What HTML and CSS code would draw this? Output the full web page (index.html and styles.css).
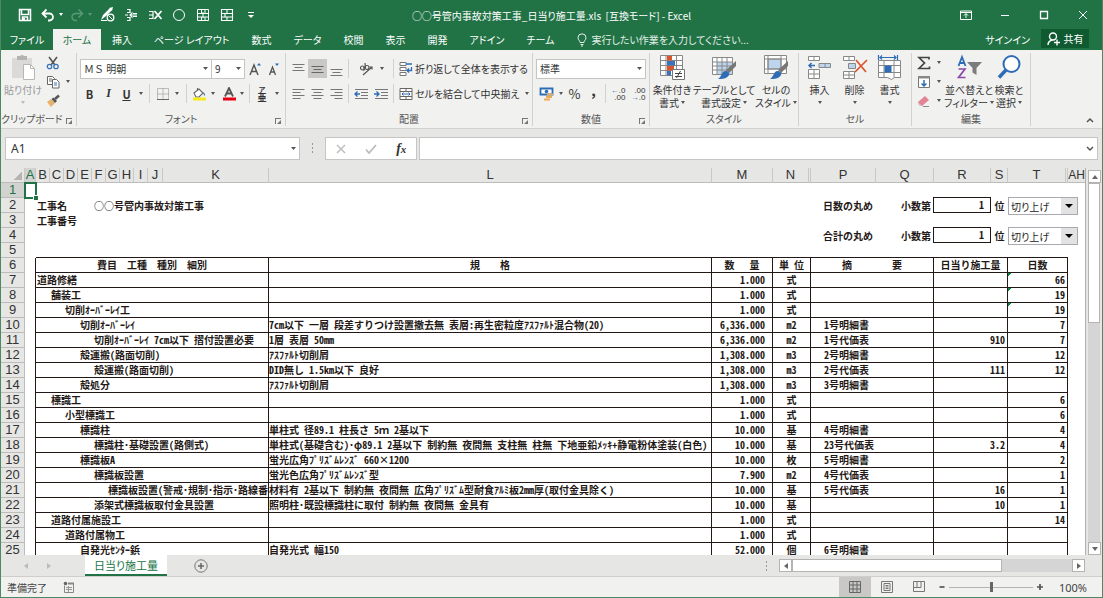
FILE: index.html
```html
<!DOCTYPE html>
<html lang="ja">
<head>
<meta charset="utf-8">
<title>○○号管内事故対策工事_日当り施工量.xls - Excel</title>
<link rel="stylesheet" href="styles.css">
</head>
<body>
<div class="window">
<header class="titlebar">
  <div class="quick">
    <button class="q" aria-label="上書き保存"><svg width="14" height="14" viewBox="0 0 14 14"><path d="M1.500 1.500h11v11h-11z M3.500 2v4.500h7V2 M4.500 12V9h5v3" fill="none" stroke="#fff" stroke-width="1.500"/><path d="M5 10h2v3H5z" fill="#fff"/></svg></button>
    <button class="q q-undo" aria-label="元に戻す"><svg width="14" height="14" viewBox="0 0 14 14"><path d="M5.500 1.500L1.500 5.500l4 4M2 5.500h6.500a3.500 3.500 0 0 1 0 7H7" fill="none" stroke="#fff" stroke-width="1.800"/></svg><i class="caret light"></i></button>
    <button class="q q-redo" aria-label="やり直し"><svg width="14" height="14" viewBox="0 0 14 14"><path d="M8.500 1.500l4 4-4 4M12 5.500H5.500a3.500 3.500 0 0 0 0 7H7" fill="none" stroke="#5b9877" stroke-width="1.500"/></svg><i class="caret dim"></i></button>
    <button class="q" aria-label="図形の書式"><svg width="15" height="15" viewBox="0 0 15 15"><path d="M1 13l2-5 7-7 2 2-6 6z M9 1l4-1-1 4z" fill="#fff"/><circle cx="10.500" cy="10.500" r="3.300" fill="#217346" stroke="#fff" stroke-width="1.300"/><path d="M8.500 8.500l4 4M1 13.500h6" stroke="#fff"/></svg></button>
    <button class="q" aria-label="行の挿入"><svg width="14" height="14" viewBox="0 0 14 14"><path d="M3 1.500h3v3H3M3 12.500h3v-3H3M6 7h7M8.500 4.500L6 7l2.500 2.500M1 7h3M9 5.500h4M9 8.500h4" fill="none" stroke="#fff" stroke-width="1.200"/></svg></button>
    <button class="q" aria-label="行の削除"><svg width="15" height="14" viewBox="0 0 15 14"><path d="M1 3.500h4v7H1M1 7h4" fill="none" stroke="#fff" stroke-width="1.200"/><path d="M6.500 3l7 8M13.500 3l-7 8" stroke="#fff" stroke-width="1.800"/></svg></button>
    <button class="q" aria-label="円"><svg width="14" height="14" viewBox="0 0 14 14"><circle cx="7" cy="7" r="5.500" fill="none" stroke="#fff"/></svg></button>
    <button class="q" aria-label="セルの結合"><svg width="14" height="14" viewBox="0 0 14 14"><path d="M1.500 1.500h11v11h-11zM1.500 5.500h11M1.500 9h11M5.500 1.500v4M9 1.500v4M5.500 9v3.500M9 9v3.500M7 4v6" fill="none" stroke="#fff"/></svg></button>
    <button class="q" aria-label="セルの分割"><svg width="14" height="14" viewBox="0 0 14 14"><path d="M1.500 1.500h11v11h-11zM1.500 5.500h11M1.500 9h11M7 1.500v4M5 5.500v3.500M7 9v3.500" fill="none" stroke="#fff" stroke-width="1.100"/></svg></button>
    <button class="q" aria-label="カスタマイズ"><svg width="8" height="8" viewBox="0 0 8 8"><path d="M1 1.500h6" stroke="#fff"/><path d="M1 4h6L4 7z" fill="#fff"/></svg></button>
  </div>
  <h1 class="doc-title">○○号管内事故対策工事_日当り施工量.xls&nbsp; [互換モード] - Excel</h1>
  <div class="win-buttons">
    <button aria-label="リボンの表示"><svg width="12" height="10" viewBox="0 0 12 10"><path d="M.5 1h11v8.500H.5zM.5 2.500h11M6 8V4M4 5.500l2-2 2 2" fill="none" stroke="#fff"/></svg></button>
    <button aria-label="最小化"><svg width="10" height="10" viewBox="0 0 10 10"><path d="M1 5.500h8" stroke="#fff"/></svg></button>
    <button aria-label="最大化"><svg width="10" height="10" viewBox="0 0 10 10"><path d="M1.500 1.500h7v7h-7z" fill="none" stroke="#fff" stroke-width="1.300"/></svg></button>
    <button aria-label="閉じる"><svg width="10" height="10" viewBox="0 0 10 10"><path d="M1 1l8 8M9 1L1 9" stroke="#fff"/></svg></button>
  </div>
</header>
<nav class="tabs">
  <button class="tab tab-file">ファイル</button>
  <button class="tab tab-home">ホーム</button>
  <button class="tab">挿入</button>
  <button class="tab">ページ レイアウト</button>
  <button class="tab">数式</button>
  <button class="tab">データ</button>
  <button class="tab">校閲</button>
  <button class="tab">表示</button>
  <button class="tab">開発</button>
  <button class="tab">アドイン</button>
  <button class="tab">チーム</button>
  <button class="tell"><svg width="10" height="14" viewBox="0 0 10 14"><path d="M3 9.500C3 7.500 1 7 1 4.800a4 4 0 0 1 8 0C9 7 7 7.500 7 9.500zM3.500 11.500h3M4 13h2" fill="none" stroke="#e3efe8"/></svg>実行したい作業を入力してください...</button>
  <button class="tab signin">サインイン</button>
  <button class="share"><svg width="13" height="14" viewBox="0 0 13 14"><circle cx="6" cy="4.500" r="3.500" fill="none" stroke="#fff" stroke-width="1.400"/><path d="M1 13c0-3 2-4.500 4.500-5M7 10.500h6M10 7.500v6" fill="none" stroke="#fff" stroke-width="1.400"/></svg>共有</button>
</nav>

<section class="ribbon">
  <div class="group g-clip">
    <div class="body">
      <button class="big paste"><svg width="25" height="27" viewBox="0 0 25 27"><path d="M1 4h20v20H1z" fill="#dcdad9"/><path d="M6 2h3a2.500 2.500 0 0 1 4 0h3v4H6z" fill="#b5b3b2"/><path d="M12.500 10.500h7l4 4v11h-11z" fill="#fff" stroke="#b9b7b6"/><path d="M19.500 10.500v4h4" fill="none" stroke="#b9b7b6"/></svg><span>貼り付け</span><i class="caret dim-gray"></i></button>
      <div class="stack">
        <button aria-label="切り取り"><svg width="14" height="14" viewBox="0 0 14 14"><path d="M3 1l6 8M11 1L5 9" stroke="#555" stroke-width="1.600"/><circle cx="3.500" cy="10.500" r="2.200" fill="none" stroke="#3a74b8" stroke-width="1.300"/><circle cx="10" cy="10.500" r="2.200" fill="none" stroke="#3a74b8" stroke-width="1.300"/></svg></button>
        <button aria-label="コピー"><svg width="14" height="14" viewBox="0 0 14 14"><path d="M1.500 1.500h5l2 2v6h-7zM3 4h3M3 6h3" fill="#fff" stroke="#666"/><path d="M6.500 4.500h4l2.500 2.500v6h-6.500z" fill="#fff" stroke="#666"/><path d="M8 8h3M8 10h3" stroke="#3a74b8"/></svg><i class="caret"></i></button>
        <button aria-label="書式のコピー"><svg width="14" height="14" viewBox="0 0 14 14"><path d="M1 8l4-3 4 4-4 4z" fill="#e7b36c"/><path d="M5.500 5l3.500 4 2-2-3.500-3.500z" fill="#555"/><path d="M9 5l4-3.500" stroke="#555" stroke-width="2.500"/></svg></button>
      </div>
    </div>
    <div class="label">クリップボード</div><button class="launch" aria-label="クリップボードの設定"></button>
  </div>

  <div class="group g-font">
    <div class="body rows">
      <div class="row">
        <select class="combo font-name" aria-label="フォント"><option>ＭＳ 明朝</option></select><select class="combo font-size" aria-label="フォント サイズ"><option>9</option></select>
        <button class="w19" aria-label="フォント サイズの拡大"><svg width="13" height="14" viewBox="0 0 13 14"><path d="M1 13L5 3l4 10M2.500 9.500h5" fill="none" stroke="#555" stroke-width="1.400"/><path d="M8 3.500L10 1l2 2.500z" fill="#2e6cb5"/></svg></button>
        <button class="w19" aria-label="フォント サイズの縮小"><svg width="13" height="14" viewBox="0 0 13 14"><path d="M1.500 13L4.500 5l3 8M2.500 10h4" fill="none" stroke="#555" stroke-width="1.300"/><path d="M7 1.500h4L9 4z" fill="#2e6cb5"/></svg></button>
      </div>
      <div class="row">
        <button class="w19 bold">B</button><button class="w19 ital">I</button><button class="w29 far"><u>U</u><i class="caret"></i></button><hr>
        <button class="w32" aria-label="罫線"><svg width="12" height="12" viewBox="0 0 12 12"><path d="M.5.5h11v11H.5zM6 .5v11M.5 6h11" fill="none" stroke="#888" stroke-dasharray="1 1"/><path d="M0 11.500h12" stroke="#666"/></svg><i class="caret"></i></button><hr>
        <button class="w29" aria-label="塗りつぶしの色"><svg width="15" height="14" viewBox="0 0 15 14"><path d="M2 6l5-4 4 4-4 4H4zM5.500 4V1" fill="#fff" stroke="#666" stroke-width="1.100"/><path d="M10.500 5c2 1 3 2 2.500 4-1-1-1.500-2-2.500-4z" fill="#2e6cb5"/><path d="M1 10.500h13v3H1z" fill="#f6e91c"/></svg><i class="caret"></i></button>
        <button class="w29" aria-label="フォントの色"><svg width="14" height="14" viewBox="0 0 14 14"><path d="M3 9.500L7 1l4 8.500M4.500 6.500h5" fill="none" stroke="#555" stroke-width="1.800"/><path d="M1 10.500h13v3H1z" fill="#e60012"/></svg><i class="caret"></i></button><hr>
        <button class="w32 far" aria-label="ふりがな"><span class="ruby"><small>ア</small>亜</span><i class="caret"></i></button>
      </div>
    </div>
    <div class="label">フォント</div><button class="launch" aria-label="フォントの設定"></button>
  </div>

  <div class="group g-align">
    <div class="body rows">
      <div class="row">
        <button class="w19" aria-label="上揃え"><svg width="13" height="14" viewBox="0 0 13 14"><path d="M.5 2.500h12M2.500 5.500h8M.5 8.500h12" stroke="#777"/></svg></button>
        <button class="w19 on" aria-label="上下中央揃え"><svg width="13" height="14" viewBox="0 0 13 14"><path d="M.5 4.500h12M2.500 7.500h8M.5 10.500h12" stroke="#666"/></svg></button>
        <button class="w19" aria-label="下揃え"><svg width="13" height="14" viewBox="0 0 13 14"><path d="M.5 7.500h12M2.500 10.500h8M.5 13.500h12" stroke="#777"/></svg></button><hr>
        <button class="w40" aria-label="方向"><svg width="15" height="14" viewBox="0 0 15 14"><circle cx="3.500" cy="6" r="2" fill="none" stroke="#555" stroke-width="1.200"/><circle cx="8" cy="5.500" r="2" fill="none" stroke="#555" stroke-width="1.200"/><path d="M5 4.500v4M6 1l.5 5M4 13l9-8M10.500 5H13v2.500" fill="none" stroke="#555" stroke-width="1.200"/></svg><i class="caret"></i></button><hr>
        <button class="text-btn"><svg width="14" height="14" viewBox="0 0 14 14"><path d="M1 .5h6v3H1zM1 5.500h6v3H1zM1 10.500h6v3H1z" fill="#fff" stroke="#777"/><path d="M7 2h6M12.500 5v3.500H8M10 6.500L8 8.500l2 2" fill="none" stroke="#2e6cb5" stroke-width="1.300"/></svg>折り返して全体を表示する</button>
      </div>
      <div class="row">
        <button class="w19" aria-label="左揃え"><svg width="13" height="12" viewBox="0 0 13 12"><path d="M.5 1.500h12M.5 4.500h8M.5 7.500h12M.5 10.500h8" stroke="#777"/></svg></button>
        <button class="w19" aria-label="中央揃え"><svg width="13" height="12" viewBox="0 0 13 12"><path d="M.5 1.500h12M2.500 4.500h8M.5 7.500h12M2.500 10.500h8" stroke="#777"/></svg></button>
        <button class="w19" aria-label="右揃え"><svg width="13" height="12" viewBox="0 0 13 12"><path d="M.5 1.500h12M4.500 4.500h8M.5 7.500h12M4.500 10.500h8" stroke="#777"/></svg></button><hr>
        <button class="w20" aria-label="インデントを減らす"><svg width="15" height="12" viewBox="0 0 15 12"><path d="M1 1.500h13M7 4.500h7M7 7.500h7M1 10.500h13" stroke="#777"/><path d="M1 6h5M3.500 3.500L1 6l2.500 2.500" fill="none" stroke="#2e6cb5" stroke-width="1.400"/></svg></button>
        <button class="w20" aria-label="インデントを増やす"><svg width="15" height="12" viewBox="0 0 15 12"><path d="M1 1.500h13M7 4.500h7M7 7.500h7M1 10.500h13" stroke="#777"/><path d="M0 6h5M2.500 3.500L5 6 2.500 8.500" fill="none" stroke="#2e6cb5" stroke-width="1.400"/></svg></button><hr>
        <button class="text-btn"><svg width="14" height="14" viewBox="0 0 14 14"><path d="M1 1.500h12v11H1zM1 4.500h12M1 9.500h12M7 1.500v3M7 9.500v3" fill="#fff" stroke="#666"/><path d="M3 7h8M4.500 5.500L3 7l1.500 1.500M9.500 5.500L11 7 9.500 8.500" fill="none" stroke="#2e6cb5"/></svg>セルを結合して中央揃え<i class="caret"></i></button>
      </div>
    </div>
    <div class="label">配置</div><button class="launch" aria-label="配置の設定"></button>
  </div>

  <div class="group g-num">
    <div class="body rows">
      <div class="row"><select class="combo num-format" aria-label="数値の書式"><option>標準</option></select></div>
      <div class="row">
        <button class="w29" aria-label="通貨表示形式"><svg width="16" height="14" viewBox="0 0 16 14"><path d="M1.500 1.500h12v6h-12z" fill="#fff" stroke="#2e6cb5" stroke-width="1.800"/><circle cx="7.500" cy="4.500" r="1.800" fill="#2e6cb5"/><path d="M8 6.500h6v2H8zM7 9h6v2H7zM5 11.500h6v2H5z" fill="#e9aa5b"/></svg><i class="caret"></i></button>
        <button class="w19 pct">%</button><button class="w19 comma">,</button><hr>
        <button class="w20" aria-label="小数点以下の表示桁数を増やす"><span class="dec"><span><b>←</b>.0</span><span>.00</span></span></button>
        <button class="w20" aria-label="小数点以下の表示桁数を減らす"><span class="dec"><span>.00</span><span><b>→</b>.0</span></span></button>
      </div>
    </div>
    <div class="label">数値</div><button class="launch" aria-label="数値の設定"></button>
  </div>

  <div class="group g-style">
    <div class="body">
      <button class="big w42"><svg width="26" height="27" viewBox="0 0 26 27"><path d="M1.500 1.500h22v20h-22zM7 1.500v20M17.500 1.500v20M1.500 6.500h22M1.500 11.500h22M1.500 16.500h22" fill="#fff" stroke="#888"/><path d="M8 2h5v4.500H8zM8 12h7v4.500H8z" fill="#d9532c"/><path d="M8 7h8v4.500H8zM8 17h4v4.500H8z" fill="#3a74b8"/><path d="M13.500 15.500h12v10h-12z" fill="#fff" stroke="#777"/><path d="M16 19.500h7M16 22.500h7M21.500 17l-4 7" stroke="#444"/></svg><span>条件付き<br>書式<i class="caret"></i></span></button>
      <button class="big w62"><svg width="26" height="27" viewBox="0 0 26 27"><path d="M1.500 3.500h20v17h-20z" fill="#fff" stroke="#888"/><path d="M6 8h15v12H6z" fill="#bdd5ec"/><path d="M1.500 8h20M1.500 12h20M1.500 16h20M6 3.500v17M11 3.500v17M16 3.500v17" stroke="#888"/><path d="M25 7v5l-7 7-3-3z" fill="#777"/><path d="M14 17c3 0 5 2 4 4-2 4-7 4-11 4 4-2 3-7 7-8z" fill="#2e6cb5"/></svg><span>テーブルとして<br>書式設定<i class="caret"></i></span></button>
      <button class="big w42"><svg width="26" height="27" viewBox="0 0 26 27"><path d="M1.500 1.500h22v18h-22z" fill="#fff" stroke="#888"/><path d="M5 5h13v10H5z" fill="#bdd5ec" stroke="#888"/><path d="M5 1.500v18M1.500 5h22M1.500 15h22M18 1.500v18" fill="none" stroke="#888"/><path d="M25 7v5l-7 7-3-3z" fill="#777"/><path d="M14 17c3 0 5 2 4 4-2 4-7 4-11 4 4-2 3-7 7-8z" fill="#2e6cb5"/></svg><span>セルの<br>スタイル<i class="caret"></i></span></button>
    </div>
    <div class="label">スタイル</div>
  </div>

  <div class="group g-cell">
    <div class="body">
      <button class="big w35"><svg width="25" height="27" viewBox="0 0 25 27"><path d="M1.500 2.500h11v4h-11zM7 2.500v4M1.500 15.500h11v9h-11zM7 15.500v9M1.500 20h11" fill="#fff" stroke="#888"/><path d="M12 9.500h11.500v4H12z" fill="#bdd5ec" stroke="#888"/><path d="M18 9.500v4" stroke="#888"/><path d="M2 11.500h6M4.500 9L2 11.500 4.500 14" fill="none" stroke="#2e6cb5" stroke-width="1.500"/></svg><span>挿入</span><i class="caret"></i></button>
      <button class="big w35"><svg width="26" height="27" viewBox="0 0 26 27"><path d="M1.500 2.500h11v4h-11zM7 2.500v4M1.500 17.500h11v7h-11zM7 17.500v7M1.500 21h11" fill="#fff" stroke="#888"/><path d="M6.500 9.500h7v5h-7z" fill="#bdd5ec" stroke="#888"/><path d="M14 6l10 12M25 6L13 18" stroke="#d9532c" stroke-width="1.700"/></svg><span>削除</span><i class="caret"></i></button>
      <button class="big w35"><svg width="26" height="27" viewBox="0 0 26 27"><path d="M1.500 1v5M20.500 1v5M3 3.500h16M5 1.500L3 3.500l2 2M17 1.500l2 2-2 2" fill="none" stroke="#2e6cb5" stroke-width="1.200"/><path d="M1.500 6.500h22v17h-6l-3 2-4-2h-9zM7 6.500v17M17 6.500v17M1.500 11.500h22M1.500 18.500h22" fill="#fff" stroke="#888"/><path d="M7.500 11.500h7v7h-7z" fill="#2e6cb5"/></svg><span>書式</span><i class="caret"></i></button>
    </div>
    <div class="label">セル</div>
  </div>

  <div class="group g-edit">
    <div class="body">
      <div class="stack wide">
        <button aria-label="合計"><svg width="14" height="14" viewBox="0 0 14 14"><path d="M12 3.500V1.500H2l5.500 5.500L2 12.500h10.500v-2" fill="none" stroke="#444" stroke-width="1.700"/></svg><i class="caret"></i></button>
        <button aria-label="フィル"><svg width="14" height="14" viewBox="0 0 14 14"><path d="M1.500 1.500h11v11h-11z" fill="#fff" stroke="#777"/><path d="M1 1h12v2.500H1z" fill="#888"/><path d="M7 5v6M4.500 8.500L7 11l2.500-2.500" fill="none" stroke="#2e6cb5" stroke-width="1.500"/></svg><i class="caret"></i></button>
        <button aria-label="クリア"><svg width="14" height="14" viewBox="0 0 14 14"><path d="M1 8l7-6 4 4-7 6H3z" fill="#e58293"/><path d="M1 8l4 4H3L1 10z" fill="#c9c9c9"/><path d="M6 12.500h6" stroke="#888"/></svg><i class="caret"></i></button>
      </div>
      <button class="big w48"><svg width="27" height="27" viewBox="0 0 27 27"><path d="M2.500 12L6 3l3.500 9M3.500 9h5" fill="none" stroke="#2e6cb5" stroke-width="1.800"/><path d="M2.500 15h6.500l-6.500 8.500h7" fill="none" stroke="#8a4aa8" stroke-width="1.700"/><path d="M11 8h15l-5.500 6v7l-4-2.500V14z" fill="#7b7b7b"/></svg><span>並べ替えと<br>フィルター<i class="caret"></i></span></button>
      <button class="big w32"><svg width="26" height="27" viewBox="0 0 26 27"><circle cx="15.500" cy="10" r="8" fill="#fff" stroke="#2e6cb5" stroke-width="2"/><path d="M10 16l-7 7.500" stroke="#2e6cb5" stroke-width="3.500"/></svg><span>検索と<br>選択<i class="caret"></i></span></button>
    </div>
    <div class="label">編集</div>
  </div>
  <button class="collapse" aria-label="リボンを折りたたむ"><svg width="8" height="6" viewBox="0 0 8 6"><path d="M1 5l3-3 3 3" fill="none" stroke="#555" stroke-width="1.500"/></svg></button>
</section>

<section class="formula-bar">
  <select class="combo name-box" aria-label="名前ボックス"><option>A1</option></select>
  <span class="grip"></span>
  <div class="fx">
    <button aria-label="キャンセル"><svg width="10" height="10" viewBox="0 0 10 10"><path d="M1 1l8 8M9 1L1 9" stroke="#bbb" stroke-width="1.400"/></svg></button>
    <button aria-label="入力"><svg width="12" height="10" viewBox="0 0 12 10"><path d="M1 5.500L4 9l7-8" fill="none" stroke="#bbb" stroke-width="1.800"/></svg></button>
    <button class="fx-btn"><b>f</b>x</button>
  </div>
  <div class="formula"><input type="text" aria-label="数式"><button aria-label="数式バーの展開"><svg width="8" height="6" viewBox="0 0 8 6"><path d="M1 1l3 3 3-3" fill="none" stroke="#555" stroke-width="1.500"/></svg></button></div>
</section>

<main class="sheet">
  <div class="grid">
  <table>
    <colgroup><col class="c-head"><col class="c-a"><col class="c-s"><col class="c-s"><col class="c-s"><col class="c-s"><col class="c-s"><col class="c-s"><col class="c-s"><col class="c-s"><col class="c-j"><col class="c-k"><col><col class="c-m"><col class="c-n"><col class="c-o"><col class="c-p"><col class="c-q"><col class="c-r"><col class="c-t1"><col class="c-t"><col class="c-o"><col class="c-t1"></colgroup>
    <thead><tr><th class="corner"></th><th class="sel">A</th><th>B</th><th>C</th><th>D</th><th>E</th><th>F</th><th>G</th><th>H</th><th>I</th><th>J</th><th>K</th><th>L</th><th>M</th><th>N</th><th></th><th>P</th><th>Q</th><th>R</th><th>S</th><th>T</th><th></th><th class="last">AH</th></tr></thead>
    <tbody>
    <tr><th class="sel">1</th><td class="active"></td><td colspan="21"></td></tr>
    <tr><th>2</th><td></td><td colspan="4" class="i0">工事名</td><td colspan="8" class="proj">○○号管内事故対策工事</td><td colspan="2"></td><td class="rl">日数の丸め</td><td class="rd">小数第</td><td class="boxed">1</td><td class="ctr">位</td><td colspan="3" class="host"><select class="round" aria-label="日数の丸め"><option>切り上げ</option></select></td></tr>
    <tr><th>3</th><td></td><td colspan="16" class="i0">工事番号</td><td class="over"></td><td colspan="4"></td></tr>
    <tr><th>4</th><td></td><td colspan="14"></td><td class="rl">合計の丸め</td><td class="rd">小数第</td><td class="boxed">1</td><td class="ctr">位</td><td colspan="3" class="host"><select class="round" aria-label="合計の丸め"><option>切り上げ</option></select></td></tr>
    <tr class="pre-head"><th>5</th><td class="none"></td><td colspan="20"></td><td class="none"></td></tr>
    <tr class="d heads"><th>6</th><td></td><td colspan="10">費目　工種　種別　細別</td><td>規　　格</td><td>数   量</td><td colspan="2">単 位</td><td colspan="2">摘　　　　要</td><td colspan="2">日当り施工量</td><td colspan="2">日数</td><td></td></tr>
    <tr class="d"><th>7</th><td></td><td colspan="10" class="i0">道路修繕</td><td></td><td>1.000</td><td colspan="2">式</td><td colspan="2"></td><td colspan="2"></td><td colspan="2" class="flag">66</td><td></td></tr>
    <tr class="d"><th>8</th><td></td><td colspan="10" class="i1">舗装工</td><td></td><td>1.000</td><td colspan="2">式</td><td colspan="2"></td><td colspan="2"></td><td colspan="2" class="flag">19</td><td></td></tr>
    <tr class="d"><th>9</th><td></td><td colspan="10" class="i2">切削ｵｰﾊﾞｰﾚｲ工</td><td></td><td>1.000</td><td colspan="2">式</td><td colspan="2"></td><td colspan="2"></td><td colspan="2" class="flag">19</td><td></td></tr>
    <tr class="d"><th>10</th><td></td><td colspan="10" class="i3">切削ｵｰﾊﾞｰﾚｲ</td><td>7cm以下 一層 段差すりつけ設置撤去無 表層:再生密粒度ｱｽﾌｧﾙﾄ混合物(20)</td><td>6,336.000</td><td colspan="2">m2</td><td colspan="2">1号明細書</td><td colspan="2"></td><td colspan="2">7</td><td></td></tr>
    <tr class="d"><th>11</th><td></td><td colspan="10" class="i4">切削ｵｰﾊﾞｰﾚｲ 7cm以下 摺付設置必要</td><td>1層 表層 50mm</td><td>6,336.000</td><td colspan="2">m2</td><td colspan="2">1号代価表</td><td colspan="2">910</td><td colspan="2">7</td><td></td></tr>
    <tr class="d"><th>12</th><td></td><td colspan="10" class="i3">殻運搬(路面切削)</td><td>ｱｽﾌｧﾙﾄ切削屑</td><td>1,308.000</td><td colspan="2">m3</td><td colspan="2">2号明細書</td><td colspan="2"></td><td colspan="2">12</td><td></td></tr>
    <tr class="d"><th>13</th><td></td><td colspan="10" class="i4">殻運搬(路面切削)</td><td>DID無し 1.5km以下 良好</td><td>1,308.000</td><td colspan="2">m3</td><td colspan="2">2号代価表</td><td colspan="2">111</td><td colspan="2">12</td><td></td></tr>
    <tr class="d"><th>14</th><td></td><td colspan="10" class="i3">殻処分</td><td>ｱｽﾌｧﾙﾄ切削屑</td><td>1,308.000</td><td colspan="2">m3</td><td colspan="2">3号明細書</td><td colspan="2"></td><td colspan="2"></td><td></td></tr>
    <tr class="d"><th>15</th><td></td><td colspan="10" class="i1">標識工</td><td></td><td>1.000</td><td colspan="2">式</td><td colspan="2"></td><td colspan="2"></td><td colspan="2">6</td><td></td></tr>
    <tr class="d"><th>16</th><td></td><td colspan="10" class="i2">小型標識工</td><td></td><td>1.000</td><td colspan="2">式</td><td colspan="2"></td><td colspan="2"></td><td colspan="2">6</td><td></td></tr>
    <tr class="d"><th>17</th><td></td><td colspan="10" class="i3">標識柱</td><td>単柱式 径89.1 柱長さ 5ｍ 2基以下</td><td>10.000</td><td colspan="2">基</td><td colspan="2">4号明細書</td><td colspan="2"></td><td colspan="2">4</td><td></td></tr>
    <tr class="d"><th>18</th><td></td><td colspan="10" class="i4">標識柱･基礎設置(路側式)</td><td>単柱式(基礎含む)･φ89.1 2基以下 制約無 夜間無 支柱無 柱無 下地亜鉛ﾒｯｷ+静電粉体塗装(白色)</td><td>10.000</td><td colspan="2">基</td><td colspan="2">23号代価表</td><td colspan="2">3.2</td><td colspan="2">4</td><td></td></tr>
    <tr class="d"><th>19</th><td></td><td colspan="10" class="i3">標識板A</td><td>蛍光広角ﾌﾟﾘｽﾞﾑﾚﾝｽﾞ 660×1200</td><td>10.000</td><td colspan="2">枚</td><td colspan="2">5号明細書</td><td colspan="2"></td><td colspan="2">2</td><td></td></tr>
    <tr class="d"><th>20</th><td></td><td colspan="10" class="i4">標識板設置</td><td>蛍光色広角ﾌﾟﾘｽﾞﾑﾚﾝｽﾞ型</td><td>7.900</td><td colspan="2">m2</td><td colspan="2">4号代価表</td><td colspan="2"></td><td colspan="2">1</td><td></td></tr>
    <tr class="d"><th>21</th><td></td><td colspan="10" class="i5">標識板設置(警戒･規制･指示･路線番</td><td>材料有 2基以下 制約無 夜間無 広角ﾌﾟﾘｽﾞﾑ型耐食ｱﾙﾐ板2mm厚(取付金具除く)</td><td>10.000</td><td colspan="2">基</td><td colspan="2">5号代価表</td><td colspan="2">16</td><td colspan="2">1</td><td></td></tr>
    <tr class="d"><th>22</th><td></td><td colspan="10" class="i4">添架式標識板取付金具設置</td><td>照明柱･既設標識柱に取付 制約無 夜間無 金具有</td><td>10.000</td><td colspan="2">基</td><td colspan="2"></td><td colspan="2">10</td><td colspan="2">1</td><td></td></tr>
    <tr class="d"><th>23</th><td></td><td colspan="10" class="i1">道路付属施設工</td><td></td><td>1.000</td><td colspan="2">式</td><td colspan="2"></td><td colspan="2"></td><td colspan="2">14</td><td></td></tr>
    <tr class="d"><th>24</th><td></td><td colspan="10" class="i2">道路付属物工</td><td></td><td>1.000</td><td colspan="2">式</td><td colspan="2"></td><td colspan="2"></td><td colspan="2"></td><td></td></tr>
    <tr class="d"><th>25</th><td></td><td colspan="10" class="i3">自発光ｾﾝﾀｰ鋲</td><td>自発光式 幅150</td><td>52.000</td><td colspan="2">個</td><td colspan="2">6号明細書</td><td colspan="2"></td><td colspan="2"></td><td></td></tr>
    </tbody>
  </table>
  </div>
  <div class="vscroll"><button class="sb" aria-label="上へ"><i class="tri up"></i></button><div class="track"><div class="thumb"></div></div><button class="sb" aria-label="下へ"><i class="tri down"></i></button></div>
</main>

<div class="sheet-tabs">
  <button class="nav" aria-label="前のシート"><i class="tri left pale"></i></button>
  <button class="nav" aria-label="次のシート"><i class="tri right pale"></i></button>
  <button class="sheet-tab">日当り施工量</button>
  <button class="add" aria-label="新しいシート"><svg width="14" height="14" viewBox="0 0 14 14"><circle cx="7" cy="7" r="6.200" fill="none" stroke="#777"/><path d="M7 4v6M4 7h6" stroke="#666" stroke-width="1.500"/></svg></button>
  <span class="grip"></span>
  <div class="hscroll"><button class="sb" aria-label="左へ"><i class="tri left"></i></button><div class="track"><div class="thumb"></div></div><button class="sb" aria-label="右へ"><i class="tri right"></i></button></div>
</div>

<footer class="status">
  <span>準備完了</span>
  <svg class="macro" width="12" height="12" viewBox="0 0 12 12"><path d="M1.500 4.500v7h9v-9h-5" fill="none" stroke="#888"/><path d="M3 6.500h6M3 8.500h6M5.500 5v6" stroke="#999"/><path d="M5 1.500h6v2H5z" fill="#888"/><circle cx="2.500" cy="2.500" r="1.800" fill="#666"/></svg>
  <button class="view on" aria-label="標準"><svg width="12" height="12" viewBox="0 0 12 12"><path d="M.5.5h11v11H.5zM.5 4h11M.5 8h11M4 .5v11M8 .5v11" fill="none" stroke="#666"/></svg></button>
  <button class="view" aria-label="ページ レイアウト"><svg width="12" height="12" viewBox="0 0 12 12"><path d="M.5.500h11v11H.5zM3 2.500h6v7H3zM4.500 4.500h3M4.500 6h3M4.500 7.500h3" fill="none" stroke="#777"/></svg></button>
  <button class="view" aria-label="改ページ プレビュー"><svg width="12" height="12" viewBox="0 0 12 12"><path d="M.5.500h11v10H.5zM4 .5v6M8 .5v6M.5 6.500H8" fill="none" stroke="#777"/></svg></button>
  <button class="zoom-btn" aria-label="縮小"><svg width="8" height="8" viewBox="0 0 8 8"><path d="M1.500 4h5" stroke="#555" stroke-width="1.700"/></svg></button>
  <input class="zoom" type="range" min="0" max="100" value="50" aria-label="ズーム">
  <button class="zoom-btn" aria-label="拡大"><svg width="8" height="8" viewBox="0 0 8 8"><path d="M1 4h6M4 1v6" stroke="#555" stroke-width="1.700"/></svg></button>
  <span class="percent">100%</span>
</footer>
</div>
</body>
</html>
```
FILE: styles.css
```css
* { box-sizing: border-box; }
body { margin: 0; font-family: "Noto Sans CJK JP", sans-serif; font-size: 10px; color: #333; }
button { border: 0; background: none; padding: 0; margin: 0; font: inherit; color: inherit; display: flex; align-items: center; justify-content: center; white-space: nowrap; flex: none; }
svg { display: block; flex: none; }
.window { height: 100vh; display: flex; flex-direction: column; border: 1px solid #4c8a65; border-top: 0; background: #e6e6e5; overflow: hidden; font-feature-settings: "palt"; }

/* Title bar */
.titlebar { background: #217346; color: #fff; height: 29px; flex: none; display: grid; grid-template-columns: 1fr auto 1fr; align-items: center; }
.quick { display: flex; padding-left: 12px; }
.q { width: 24px; height: 24px; gap: 4px; }
.q-undo, .q-redo { width: 29px; }
.doc-title { margin: 0; font-size: 10px; font-weight: 400; line-height: 16px; padding-top: 3px; white-space: nowrap; }
.win-buttons { display: flex; justify-content: flex-end; }
.win-buttons button { width: 39px; height: 24px; }

/* Ribbon tabs */
.tabs { background: #217346; color: #fff; height: 21px; flex: none; display: flex; align-items: stretch; padding-right: 13px; }
.tab { padding: 0 11px; }
.tab-file { width: 52px; padding: 0; }
.tab-home { background: #f1f1f0; color: #217346; width: 48px; padding: 0; }
.tell { gap: 4px; padding-left: 12px; color: #e3efe8; }
.signin { margin-left: auto; }
.share { background: #0f5a31; gap: 4px; width: 48px; height: 19px; }

/* Ribbon */
.ribbon { height: 79px; flex: none; display: flex; background: #f1f1f0; border-bottom: 1px solid #d2d1d0; padding: 3px 0 2px; }
.group { border-right: 1px solid #d2d1d0; position: relative; display: flex; flex-direction: column; justify-content: space-between; flex: none; }
.g-clip { width: 76px; }
.g-font { width: 209px; }
.g-align { width: 247px; }
.g-num { width: 117px; }
.g-style { width: 149px; }
.g-style .body { padding-left: 1px; }
.g-cell { width: 113px; }
.g-edit { width: 119px; }
.body { display: flex; padding-left: 3px; }
.rows { flex-direction: column; gap: 6px; padding-top: 6px; }
.row { display: flex; align-items: center; height: 19px; }
.row hr { width: 1px; height: 19px; margin: 0 2px; border: 0; background: #d2d1d0; flex: none; }
.row > button { height: 19px; gap: 6px; }
.label { text-align: center; line-height: 14px; color: #555; white-space: nowrap; }
.g-clip .label { padding-right: 14px; }
.launch { position: absolute; right: 4px; bottom: 2px; width: 6px; height: 6px; border-top: 1px solid #777; border-left: 1px solid #777; }
.launch::after { content: ""; position: absolute; right: 0; bottom: 0; border: 2px solid #777; border-top-color: transparent; border-left-color: transparent; }
.caret { width: 0; height: 0; border: 2px solid transparent; border-top: 3px solid #555; border-bottom: 0; display: inline-block; flex: none; }
.caret.light { border-top-color: #fff; }
.caret.dim { border-top-color: #5b9877; }
.caret.dim-gray { border-top-color: #bbb; }
.big { flex-direction: column; justify-content: flex-start; line-height: 13px; padding-top: 1px; gap: 2px; }
.big span { text-align: center; }
.big span .caret { margin-left: 2px; vertical-align: 3px; }
.big > .caret { margin-top: 3px; }
.paste { width: 38px; color: #999; }
.stack { display: flex; flex-direction: column; width: 32px; padding-left: 4px; }
.stack button { height: 19px; justify-content: flex-start; gap: 6px; }
.stack.wide { width: 30px; padding-left: 2px; }
.w19 { width: 19px; }
.w20 { width: 20px; }
.w29 { width: 29px; }
.w32 { width: 32px; }
.w35 { width: 35px; }
.w40 { width: 40px; }
.w42 { width: 42px; }
.w48 { width: 48px; }
.w62 { width: 62px; }
.row > .w29 { gap: 4px; }
.row > .far { gap: 8px; }
.on { background: #c9c8c7; }
.bold, .row u { font-weight: 700; font-size: 11px; }
.ital { font-style: italic; font-weight: 700; font-family: "Liberation Serif", serif; font-size: 12px; }
.ruby { display: flex; flex-direction: column; font-size: 9px; line-height: 9px; font-weight: 700; align-items: center; }
.ruby small { font-size: 7px; line-height: 7px; }
.combo { appearance: none; height: 20px; border: 1px solid #c6c5c4; border-radius: 0; margin: 0; padding: 0 3px; font: inherit; font-feature-settings: normal; color: #333; background: #fff url("data:image/svg+xml,%3Csvg xmlns='http://www.w3.org/2000/svg' width='5' height='3'%3E%3Cpath d='M0 0h5L2.500 3z' fill='%23555'/%3E%3C/svg%3E") no-repeat right 3px center; }
.font-name { width: 132px; }
.font-size { width: 34px; margin: 0 1px 0 -1px; }
.num-format { width: 110px; }
.text-btn { padding-left: 3px; }
.row > .text-btn { gap: 2px; }
.row > .text-btn .caret { margin-left: 3px; }
.pct { font-size: 13px; }
.row > .comma { font-size: 14px; font-weight: 700; padding-bottom: 8px; }
.dec { display: flex; flex-direction: column; align-items: flex-end; font-family: "Liberation Sans", sans-serif; font-size: 8px; line-height: 7px; }
.dec b { color: #2e6cb5; }
.collapse { margin-left: auto; align-self: flex-end; width: 24px; height: 12px; }

/* Formula bar */
.formula-bar { flex: none; display: flex; padding: 8px 4px 9px; height: 39px; }
.formula-bar > * { height: 23px; }
.formula-bar .name-box { height: 23px; width: 295px; font-family: "Noto Sans", sans-serif; font-size: 12px; padding-left: 5px; }
.grip { width: 25px; height: 12px; align-self: center; background: radial-gradient(circle, #999 0 1px, transparent 1px) center top / 3px 4px no-repeat, radial-gradient(circle, #999 0 1px, transparent 1px) center / 3px 4px no-repeat, radial-gradient(circle, #999 0 1px, transparent 1px) center bottom / 3px 4px no-repeat; }
.formula-bar .grip { height: 12px; }
.fx { width: 92px; border: 1px solid #c6c5c4; background: #fff; display: flex; justify-content: space-around; margin-right: 2px; }
.fx-btn { font-family: "Liberation Serif", serif; font-style: italic; font-size: 11px; font-weight: 700; }
.fx-btn b { font-size: 14px; }
.formula { flex: 1; border: 1px solid #c6c5c4; background: #fff; display: flex; }
.formula input { flex: 1; border: 0; background: none; padding: 0 4px; min-width: 0; font: inherit; }
.formula button { width: 14px; }

/* Worksheet */
.sheet { flex: 1; min-height: 0; display: flex; }
.grid { flex: 1; min-width: 0; overflow: hidden; background: #fff; border-right: 1px solid #b0b0b0; }
table { width: 100%; table-layout: fixed; border-collapse: separate; border-spacing: 0; }
.c-head { width: 24px; }
.c-a { width: 11px; }
.c-s { width: 14px; }
.c-j { width: 15px; }
.c-k { width: 106px; }
.c-m { width: 61px; }
.c-n { width: 36px; }
.c-o { width: 2px; }
.c-p { width: 65px; }
.c-q { width: 58px; }
.c-r { width: 57px; }
.c-t1 { width: 17px; }
.c-t { width: 58px; }
tr { height: 15px; }
th, td { padding: 0; height: 15px; }
th { font-family: "Liberation Sans", sans-serif; font-size: 13px; font-weight: 400; line-height: 14px; color: #333; background: #e6e6e5; border-right: 1px solid #bdbcbb; border-bottom: 1px solid #bdbcbb; white-space: nowrap; }
thead th { border-right-color: #c9c8c7; }
.last { font-size: 12px; border-right: 0; }
th.sel { background: #d2d2d1; color: #217346; }
.corner { background: linear-gradient(135deg, transparent 50%, #b5b4b3 50%) 12px 3px / 9px 9px no-repeat #e6e6e5; }
td { font-family: "Noto Sans Mono CJK JP", "Noto Sans CJK JP", monospace; font-feature-settings: normal; font-size: 10px; font-weight: 700; line-height: 14px; color: #231815; white-space: pre; overflow: hidden; }
.active { outline: 2px solid #217346; outline-offset: -1px; position: relative; overflow: visible; }
.active::after { content: ""; position: absolute; right: -2px; bottom: -2px; width: 4px; height: 4px; background: #217346; border: solid #fff; border-width: 1px 0 0 1px; }
.i0 { padding-left: 1px; }
.i1 { padding-left: 15px; }
.i2 { padding-left: 29px; }
.i3 { padding-left: 44px; }
.i4 { padding-left: 58px; }
.i5 { padding-left: 72px; }
.proj { padding-left: 2px; }
.rl { padding-left: 12px; }
.rd { text-align: right; padding-right: 3px; }
.ctr { text-align: center; }
.boxed { text-align: right; padding-right: 6px; box-shadow: 0 -1px #231815, -1px 0 #231815, -1px -1px #231815; border: solid #231815; border-width: 0 1px 1px 0; }
.host { position: relative; overflow: visible; }
.round { position: absolute; left: 0; top: -1px; width: 70px; height: 18px; appearance: none; border: 1px solid #aaa9b0; border-radius: 0; margin: 0; padding: 0 2px; font: 10px "Noto Sans CJK JP", sans-serif; font-feature-settings: "palt"; color: #222; background: url("data:image/svg+xml,%3Csvg xmlns='http://www.w3.org/2000/svg' width='16' height='16'%3E%3Cpath d='M0 0h16v16H0z' fill='%23e2e2e2'/%3E%3Cpath d='M4 6h8l-4 4z'/%3E%3C/svg%3E") no-repeat right center #fff; }
.pre-head td { border-bottom: 1px solid #231815; }
.pre-head .none { border: 0; }
.d td { border: solid #231815; border-width: 0 1px 1px 0; }
.d td:nth-child(2) { border-bottom: 0; }
.d td:last-child { border: 0; }
.d td:nth-child(5) { text-align: right; padding-right: 7px; }
.d td:nth-child(6) { text-align: center; }
.d td:nth-child(7) { padding-left: 13px; }
.d td:nth-child(8), .d td:nth-child(9) { text-align: right; padding-right: 2px; }
.heads td:nth-child(n) { text-align: center; padding: 0; }
.flag { background: linear-gradient(135deg, #0a8a45 50%, transparent 50%) 0 0 / 4px 4px no-repeat; }

/* Scroll bars */
.vscroll { width: 16px; padding: 2px 2px 0; display: flex; flex-direction: column; }
.sb { width: 13px; height: 13px; background: #fff; border: 1px solid #b5b4b3; }
.track { flex: 1; background: #d6d5d5; }
.thumb { background: #fff; border: 1px solid #b5b4b3; }
.vscroll .thumb { height: 39%; }
.tri { border: 3px solid transparent; }
.up { border-bottom: 4px solid #666; border-top: 0; }
.down { border-top: 4px solid #666; border-bottom: 0; }
.left { border-right: 4px solid #666; border-left: 0; }
.right { border-left: 4px solid #666; border-right: 0; }
.left.pale { border-right-color: #bbb; }
.right.pale { border-left-color: #bbb; }
.sheet-tabs { height: 22px; flex: none; display: flex; align-items: center; padding: 0 17px 0 13px; border-bottom: 1px solid #cfcecd; }
.nav { width: 23px; height: 18px; }
.sheet-tab { align-self: flex-start; width: 82px; height: 21px; margin: 0 27px 0 25px; background: #fff; color: #217346; border-bottom: 2px solid #217346; font-size: 11px; }
.sheet-tabs .grip { margin-left: auto; }
.hscroll { width: 306px; display: flex; height: 13px; }
.hscroll .thumb { width: 75%; height: 13px; }

/* Status bar */
.status { height: 20px; flex: none; display: flex; align-items: center; background: #f1f1f0; color: #444; padding: 0 15px 0 6px; }
.macro { margin: 0 auto 0 16px; }
.view { width: 32px; height: 20px; }
.zoom-btn { width: 14px; height: 16px; }
.zoom { appearance: none; width: 84px; height: 16px; margin: 0; background: linear-gradient(#b5b4b3, #b5b4b3) center / 100% 1px no-repeat; }
.zoom::-webkit-slider-thumb { appearance: none; width: 3px; height: 10px; background: #666; }
.percent { font-family: "Noto Sans", sans-serif; font-size: 11px; width: 40px; text-align: right; }
```
